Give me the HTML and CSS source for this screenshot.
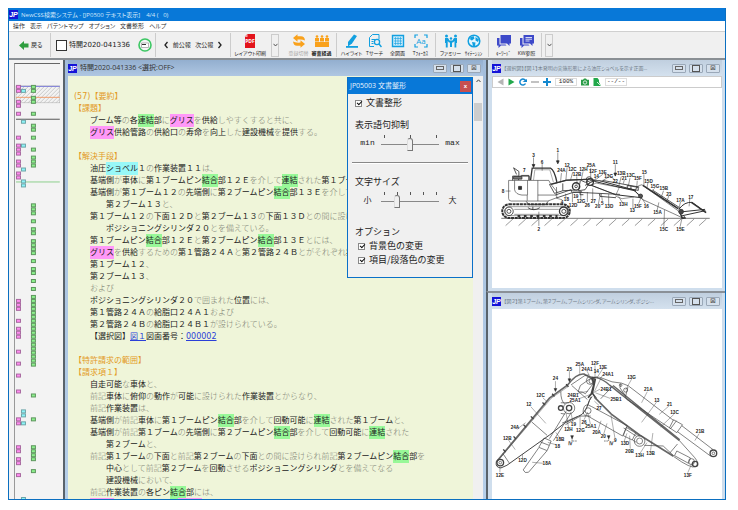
FILE: index.html
```html
<!DOCTYPE html>
<html lang="ja">
<head>
<meta charset="utf-8">
<title>NewCSS検索システム</title>
<link rel="stylesheet" href="styles.css">
</head>
<body>
<div class="app">
  <header class="titlebar"><span class="logo">JP</span><span>NewCSS検索システム - [JP0500 テキスト表示]</span><span>4/4 (&nbsp;&nbsp; 0)</span></header>
  <nav class="menu"><a href="#">操作</a><a href="#">表示</a><a href="#">パテントマップ</a><a href="#">オプション</a><a href="#">文書整形</a><a href="#">ヘルプ</a></nav>

  <div class="toolbar">
    <div class="group back">
      <button class="plain"><svg width="10" height="9" viewBox="0 0 10 9"><path d="M5 0v2.600h4.500v3.800H5V9L0 4.500z" fill="#2f9e3f"/></svg>戻る</button>
    </div>
    <div class="group doc">
      <label class="docno"><input type="checkbox">特開2020-041336</label>
      <button class="plain" aria-label="表示"><svg width="14" height="14" viewBox="0 0 14 14"><circle cx="7" cy="7" r="6" fill="#f4f4f4" stroke="#3cc763" stroke-width="1.600"/><path d="M3.500 5h7v4.500h-7z" fill="#fff" stroke="#888" stroke-width=".6"/><path d="M4 6.500h4" stroke="#333"/></svg></button>
    </div>
    <div class="group pager">
      <svg width="4" height="8" viewBox="0 0 4 8"><path d="M3.500 1 1 4l2.500 3" fill="none" stroke="#222" stroke-width="1.300"/></svg>
      <button class="plain">前公報</button><button class="plain">次公報</button>
      <svg width="4" height="8" viewBox="0 0 4 8"><path d="M.5 1 3 4 .5 7" fill="none" stroke="#222" stroke-width="1.300"/></svg>
    </div>
    <div class="group print">
      <button class="tool wide"><svg width="14" height="14" viewBox="0 0 14 14"><path d="M4.500 0H12v14H2V2.500z" fill="#e3141c"/><path d="M1.500 3 4.500 0v3z" fill="#f6a5a5"/><text x="7" y="9" text-anchor="middle" font-size="5" font-weight="700" fill="#fff">PDF</text></svg>レイアウト印刷</button>
      <button class="drop" aria-label="印刷メニュー"><svg width="5" height="4" viewBox="0 0 5 4"><path d="M.5.800 2.500 3 4.500.8" fill="none" stroke="#444" stroke-width=".9"/></svg></button>
    </div>
    <div class="group">
      <button class="tool off"><svg width="14" height="14" viewBox="0 0 14 14"><g fill="#f9a11b"><path id="turn" d="M1 4 5.500.300v2H9q3.500 0 4 4.200-2.500-1.500-7.500-1v2.300z"/><use href="#turn" transform="rotate(180 7 7)"/></g></svg>登録切替</button>
      <button class="tool strong"><svg width="14" height="14" viewBox="0 0 14 14"><path d="M0 8h14v5H0zM0 4h4v3.500H0zM5 4h4v3.500H5zM10 4h4v3.500h-4z" fill="#f9a11b"/><g fill="#f9a11b"><circle cx="2" cy="2.500" r="1.300"/><circle cx="7" cy="2.500" r="1.300"/><circle cx="12" cy="2.500" r="1.300"/></g></svg>審査経過</button>
    </div>
    <div class="group">
      <button class="tool"><svg width="14" height="14" viewBox="0 0 14 14"><path d="M9 .5 12 2 7 9.500 3 12.500V8z" fill="#12a0e0"/><path d="M1 12.900h12" stroke="#12a0e0" stroke-width="1.800"/></svg>ハイライト</button>
      <button class="tool"><svg width="14" height="14" viewBox="0 0 14 14"><g fill="none" stroke="#12a0e0"><path d="M6 12.500H1.500v-9l3-3H11V5M3.500 5.500h4M3.500 7.500h2M3.500 9.500h2"/><circle cx="9" cy="8" r="2.600" stroke-width="1.300"/><path d="m11 10 2.500 3" stroke-width="1.500"/></g></svg>Tサーチ</button>
      <button class="tool"><svg width="14" height="14" viewBox="0 0 14 14"><path d="M1.500 1.500h11v11h-11z" fill="#c9eafa" stroke="#12a0e0" stroke-width="1.400"/><path d="M4.500 3v8M7 3v8M9.500 3v8M3 4.500h8M3 7h8M3 9.500h8" stroke="#12a0e0" stroke-width=".6"/></svg>全図面</button>
      <button class="tool"><svg width="14" height="14" viewBox="0 0 14 14"><path d="M1 4V1h3M10 1h3v3M13 10v3h-3M4 13H1v-3" fill="none" stroke="#12a0e0" stroke-width="1.200"/><text x="7" y="10" text-anchor="middle" font-size="8" fill="#12a0e0">Aa</text></svg>Tﾌｫｰｶｽ</button>
    </div>
    <div class="group">
      <button class="tool"><svg width="14" height="14" viewBox="0 0 14 14"><g fill="#12a0e0"><circle cx="2.500" cy="2" r="1.500"/><circle cx="11.500" cy="2" r="1.500"/><circle cx="7" cy="4.500" r="1.200"/><path d="M1 4h3l1.500 2.500h3L10 4h3v5h-.7v4.500h-1.800V7L9 8.500H8V13H6V8.500H5L3.700 7v6.500H1.800V9H1z"/></g></svg>ファミリー</button>
      <button class="tool"><svg width="14" height="14" viewBox="0 0 14 14"><circle cx="7" cy="7" r="5.800" fill="#e6f6fd" stroke="#12a0e0" stroke-width="1.500"/><path d="M3 3.500 6.500 2l1 2.500L5 6.500 3.500 6zM8.500 3 12 5.500 11 8 8.500 6.500zM5 8l3.500.5L8 12H6z" fill="#12a0e0"/></svg>ｻｲﾃｰｼｮﾝ</button>
    </div>
    <div class="group">
      <button class="tool"><svg width="14" height="14" viewBox="0 0 14 14"><path d="M3.500 1H14v8.500h-1.500V12L10 9.500H3.500z" fill="#3d49c9"/><path d="M2.500 4H0v7.500h1.500V14L4 11.500h5.500L8.500 10.500h-6z" fill="#3d49c9"/></svg>ｷｰﾜｰﾄﾞ</button>
      <button class="tool"><svg width="14" height="14" viewBox="0 0 14 14"><path d="M3.500 1H14v8.500h-1.500V12L10 9.500H3.500z" fill="#3d49c9"/><path d="M2.500 4H0v7.500h1.500V14L4 11.500h5.500L8.500 10.500h-6z" fill="#3d49c9"/><path d="M5.500 3.500h6.500M5.500 5.200h6.500M5.500 7h4" stroke="#fff" stroke-width=".8"/></svg>KW参照</button>
    </div>
    <button class="drop" aria-label="ツールメニュー"><svg width="5" height="4" viewBox="0 0 5 4"><path d="M.5.800 2.500 3 4.500.8" fill="none" stroke="#444" stroke-width=".9"/></svg></button>
  </div>

  <main class="work">
    <aside class="map">
      <svg id="map" viewBox="14 62 46 437" preserveAspectRatio="xMinYMin slice">
        <defs><pattern id="hatch" width="4" height="4" patternUnits="userSpaceOnUse"><path d="M0 4 4 0M-1 1l2-2M3 5l2-2" stroke="#bdbdbd" stroke-width=".8"/></pattern></defs>
        <rect x="15" y="84" width="44" height="17" fill="url(#hatch)" stroke="#aaa" stroke-width=".5"/>
        <path d="M15 84.500h44" stroke="#7d7dd8"/><path d="M15 95.500h44" stroke="#f0a070"/>
        <path d="M15 117.500h44" stroke="#555"/><path d="M15 180.500h44" stroke="#8ccf8c"/>
      </svg>
    </aside>

    <section class="win active">
      <div class="wintitle"><span class="logo">JP</span><h2>特開2020-041336 &lt;選択:OFF&gt;</h2><button class="wb min" aria-label="最小化"></button><button class="wb max" aria-label="最大化"></button><button class="wb cls" aria-label="閉じる">⊠</button></div>
      <div class="textpane">
        <article class="doc-text">
          <h3>(57)【要約】</h3>
          <h3>【課題】</h3>
          <p>ブーム等<small>の</small>各<mark class="g">連結</mark>部<small>に</small><mark class="m">グリス</mark><small>を</small>供給<small>しやすくすると共に、</small></p>
          <p><mark class="m">グリス</mark>供給管路<small>の</small>供給口<small>の</small>寿命<small>を</small>向上<small>した</small>建設機械<small>を</small>提供<small>する。</small></p>
          <h3 class="gap">【解決手段】</h3>
          <p>油圧<mark class="c">ショベル</mark>１<small>の</small>作業装置１１<small>は、</small></p>
          <p>基端側<small>が</small>車体<small>に</small>第１ブームピン<mark class="g">結合</mark>部１２Ｅ<small>を介して</small><mark class="g">連結</mark><small>された</small>第１ブー</p>
          <p>基端側<small>が</small>第１ブーム１２<small>の</small>先端側<small>に</small>第２ブームピン<mark class="g">結合</mark>部１３Ｅ<small>を介して</small></p>
          <p class="sub">第２ブーム１３<small>と、</small></p>
          <p>第１ブーム１２<small>の</small>下面１２Ｄ<small>と</small>第２ブーム１３<small>の</small>下面１３Ｄ<small>との間に設け</small></p>
          <p class="sub">ポジショニングシリンダ２０<small>とを備えている。</small></p>
          <p>第１ブームピン<mark class="g">結合</mark>部１２Ｅ<small>と</small>第２ブームピン<mark class="g">結合</mark>部１３Ｅ<small>とには、</small></p>
          <p><mark class="m">グリス</mark><small>を</small>供給<small>するための</small>第１管路２４Ａ<small>と</small>第２管路２４Ｂ<small>とがそれぞれ</small>接</p>
          <p>第１ブーム１２<small>、</small></p>
          <p>第２ブーム１３<small>、</small></p>
          <p><small>および</small></p>
          <p>ポジショニングシリンダ２０<small>で囲まれた</small>位置<small>には、</small></p>
          <p>第１管路２４Ａ<small>の</small>給脂口２４Ａ１<small>および</small></p>
          <p>第２管路２４Ｂ<small>の</small>給脂口２４Ｂ１<small>が設けられている。</small></p>
          <p>【選択図】<a href="#">図１</a>図面番号：<a href="#">000002</a></p>
          <h3 class="gap">【特許請求の範囲】</h3>
          <h3>【請求項１】</h3>
          <p>自走可能<small>な</small>車体<small>と、</small></p>
          <p><small>前記</small>車体<small>に</small>俯仰<small>の</small>動作<small>が</small>可能<small>に設けられた</small>作業装置<small>とからなり、</small></p>
          <p><small>前記</small>作業装置<small>は、</small></p>
          <p>基端側<small>が前記</small>車体<small>に</small>第１ブームピン<mark class="g">結合</mark>部<small>を介して</small>回動可能<small>に</small><mark class="g">連結</mark><small>された</small>第１ブーム<small>と、</small></p>
          <p>基端側<small>が前記</small>第１ブーム<small>の</small>先端側<small>に</small>第２ブームピン<mark class="g">結合</mark>部<small>を介して</small>回動可能<small>に</small><mark class="g">連結</mark><small>された</small></p>
          <p class="sub">第２ブーム<small>と、</small></p>
          <p><small>前記</small>第１ブーム<small>の</small>下面<small>と前記</small>第２ブーム<small>の</small>下面<small>との間に設けられ前記</small>第２ブームピン<mark class="g">結合</mark>部<small>を</small></p>
          <p class="sub">中心<small>として前記</small>第２ブーム<small>を</small>回動<small>させる</small>ポジショニングシリンダ<small>とを備えてなる</small></p>
          <p class="sub">建設機械<small>において、</small></p>
          <p><small>前記</small>作業装置<small>の</small>各ピン<mark class="g">結合</mark>部<small>には、</small></p>
          <p><mark class="m">　　　</mark>　　　　　　　　<mark class="m">　　　</mark></p>
        </article>
        <div class="scroll"><svg width="5" height="4" viewBox="0 0 5 4"><path d="M.5 3 2.500.800 4.500 3" fill="none" stroke="#444"/></svg><i></i></div>
      </div>

      <form class="dialog">
        <div class="dtitle">JP05003 文書整形<button type="button" aria-label="閉じる">x</button></div>
        <div class="dbody">
          <label class="check"><input type="checkbox" checked>文書整形</label>
          <label class="cap" for="level">表示語句抑制</label>
          <div class="slide"><span class="mono">min</span>
            <div class="range"><svg width="58" height="3" viewBox="0 0 58 3"><path d="M3.500 0v3M29.500 0v3M55.500 0v3" stroke="#555"/></svg><input id="level" type="range" min="0" max="2" value="1"></div>
          <span class="mono">max</span></div>
          <hr>
          <label class="cap" for="size">文字サイズ</label>
          <div class="slide"><span>小</span>
            <div class="range"><svg width="58" height="3" viewBox="0 0 58 3"><path d="M3.500 0v3M16.500 0v3M29.500 0v3M42.500 0v3M55.500 0v3" stroke="#555"/></svg><input id="size" type="range" min="0" max="4" value="1"></div>
          <span>大</span></div>
          <p class="cap last">オプション</p>
          <label class="check in"><input type="checkbox" checked>背景色の変更</label>
          <label class="check in"><input type="checkbox" checked>項目/段落色の変更</label>
        </div>
      </form>
    </section>

    <div class="side">
      <section class="win">
        <div class="wintitle"><span class="logo">JP</span><h2>【選択図】【図１】本発明の実施形態による油圧ショベルを示す正面...</h2><button class="wb min" aria-label="最小化"></button><button class="wb max" aria-label="最大化"></button><button class="wb cls" aria-label="閉じる">⊠</button></div>
        <div class="figbar">
          <svg width="7" height="8" viewBox="0 0 7 8"><path d="M6.500.500v7L.5 4z" fill="#b5b5b5"/></svg>
          <svg width="7" height="8" viewBox="0 0 7 8"><path d="M.5.500v7l6-3.500z" fill="#22a84b"/></svg>
          <svg width="8" height="8" viewBox="0 0 8 8"><path d="M6.500 5.500A3 3 0 1 1 6.700 3" fill="none" stroke="#1488cf" stroke-width="1.500"/><path d="M3.500 4H8V1z" fill="#1488cf"/></svg>
          <svg width="8" height="8" viewBox="0 0 8 8"><path d="M0 4h8" stroke="#bbb" stroke-width="1.800"/></svg>
          <svg width="8" height="8" viewBox="0 0 8 8"><path d="M0 4h8M4 0v8" stroke="#1488cf" stroke-width="2"/></svg>
          <span class="box mono">100%</span>
          <svg width="8" height="8" viewBox="0 0 8 8"><path d="M0 1.800h2L3 .5h2l1 1.300h2v5.700H0z" fill="#2a9c48"/><circle cx="4" cy="4.500" r="1.700" fill="none" stroke="#fff" stroke-width=".8"/></svg>
          <svg width="8" height="8" viewBox="0 0 8 8"><path d="M.5 0h4l1.500 2v2L8 8H.5z" fill="#22a84b"/><path d="m4 4 3.500 3.500" stroke="#fff" stroke-width=".8"/></svg>
          <span class="box mono">--/--</span>
        </div>
        <svg class="fig" viewBox="18 -159 690 603" preserveAspectRatio="xMidYMin meet">
          <g fill="none" stroke="#333" stroke-width="2.500">
            <path d="M45 233H672" stroke="#777" stroke-width="3"/>
            <path d="M80 235 58 255M119 235l-22 20M158 235l-22 20M197 235l-22 20M236 235l-22 20M275 235l-22 20M314 235l-22 20M352 235l-22 20M391 235l-22 20M430 235l-22 20M469 235l-22 20M508 235l-22 20M547 235l-22 20M586 235l-22 20M625 235l-22 20M662 235l-22 20" stroke="#666" stroke-width="2"/>
            <rect x="48" y="191" width="203" height="41" rx="20" stroke-width="6" stroke-dasharray="9 2"/>
            <rect x="57" y="198" width="186" height="27" rx="13" stroke-width="1.500"/>
            <circle cx="68" cy="212" r="13"/><circle cx="68" cy="212" r="6"/><circle cx="233" cy="212" r="13" stroke-width="4"/><circle cx="233" cy="212" r="6"/>
            <path d="M84 206h134M84 221h134" stroke-width="1.500"/><path d="M94 226h120" stroke-width="6" stroke-dasharray="8 11"/><path d="M125 201q18 12 36 0M140 198v10M120 182l8 10h50l8-10"/>
            <path d="M67 119v54q0 8 8 8h110l27-10-1-32M67 119h121l5 10 20 25M85 119v28q3 14 22 16h16v17M124 119v44M155 119v62M155 163h54" stroke-width="1.800"/>
            <path d="M133 118 138 82h55q12 5 20 45" stroke-width="4"/><path d="M142 118l4-31h45l11 38" stroke-width="1.200"/>
            <path d="M79 119v-13h50v13M91 101l-9-20 16 11v11M97 104v14M105 104h23v14"/><path d="M97 137h9v9h-9z" fill="#333"/><path d="M82 107h25v8H82z" fill="#777"/>
            <path d="M190 131l51-12 31-2 42-2M190 131l15 27 25-8 36-2M230 128v22" stroke-width="2.500"/>
            <path d="M195 131l46-13 62-2" stroke-width="4"/><path d="M207 163l48-16M210 172l48-16 30-3M255 147l3 9"/>
            <circle cx="270" cy="137" r="11" stroke-width="4"/><circle cx="270" cy="137" r="4"/><circle cx="312" cy="124" r="10" stroke-width="4"/><path d="M283 119l-6 31 20-3 15-23M300 116q2-10 12-8l13 12M297 134l25-13M285 119q12 10 26 2"/>
            <path d="M312 120h30l100 27 25 22M317 134l72 28 78 9M325 122l125 29" stroke-width="3"/><path d="M340 158l62 3M260 154l80 4 2 9 48 4M350 119l110 20M398 139l51 9M282 152v10h10"/>
            <path d="M330 127l-15 7 75 28 10-22zM388 166l20 8 36-5" stroke-width="1.500"/>
            <path d="M448 151q2-16 20-19l110 79 11 20-28-13-92-42z" stroke-width="1.800"/><path d="M471 134l106 70" stroke-width="5"/><circle cx="464" cy="166" r="6" fill="#555"/><path d="M500 148l80 52 7 18M503 155l65 43M424 134l33 6v9l-33-6zM435 136v9"/>
            <path d="M580 205q16-22 39-20l42 31M583 214l75-8M590 225l69-15" stroke-width="3"/><path d="M617 185l44 31" stroke-width="5"/><circle cx="586" cy="213" r="7" fill="#444"/><path d="M584 219l6 13h10" stroke-width="4"/><circle cx="591" cy="229" r="5"/>
            <path d="M215 35v29M142 50v25M168 70v20M388 71v30M388 118l-20-15M58 151h15M158 213v43M228 177l-16-4M243 80l-4 41M226 97l-3 28M260 94l-7 25M272 107l1 25M291 92l-6 27M314 82v32M330 113l-14 10M350 101l-27 20M366 110l-29 17M406 107l-8 31M415 118l-3 11M432 112l-5 25M454 120l-2 25M474 101v32M486 126l-3 17M506 143l-7 7M533 150l-7 20M549 165l-6 18M584 184l-6 25M612 174l-2 23M240 172l-2-13M259 185v-28M284 174v-17M304 184v-30M320 176v-33M337 190l6-30M349 180l-3-21M368 191v-31M409 185l-11-17M441 203v-29M458 189l8-20M479 190l-12-19M514 208l5-23M534 258l2-50M583 258l6-28" stroke-width="1.500"/>
            <path d="M211 60h8l-4 9zM138 71h8l-4 9zM384 97h8l-4 9z" fill="#222"/>
          </g>
          <g class="refs"><text x="215" y="33">1</text><text x="142" y="49">3</text><text x="168" y="70">6</text><text x="114" y="95">7</text><text x="226" y="95">24A</text><text x="243" y="78">12</text><text x="259" y="91">12C</text><text x="273" y="105">12B</text><text x="292" y="91">12H</text><text x="315" y="80">25A</text><text x="321" y="96">12F</text><text x="331" y="111">14</text><text x="350" y="99">13E</text><text x="368" y="113">13G</text><text x="388" y="126">22</text><text x="388" y="69">11</text><text x="406" y="104">13B</text><text x="415" y="119">21</text><text x="434" y="109">13C</text><text x="456" y="119">15F</text><text x="475" y="99">15</text><text x="488" y="127">15D</text><text x="507" y="141">15G</text><text x="534" y="148">15B</text><text x="549" y="165">23</text><text x="584" y="183">17A</text><text x="615" y="175">17</text><text x="50" y="156">8</text><text x="241" y="182">18</text><text x="228" y="190">4</text><text x="269" y="173">19</text><text x="261" y="198">12D</text><text x="285" y="186">12G</text><text x="304" y="198">26</text><text x="322" y="187">27</text><text x="335" y="202">20</text><text x="349" y="192">5</text><text x="369" y="203">13D</text><text x="412" y="196">13H</text><text x="439" y="215">13</text><text x="456" y="201">15F</text><text x="481" y="202">16</text><text x="515" y="220">15A</text><text x="534" y="272">15C</text><text x="584" y="272">15E</text><text x="158" y="272">2</text></g>
        </svg>
      </section>
      <section class="win">
        <div class="wintitle"><span class="logo">JP</span><h2>【図２】第１ブーム、第２ブーム、ブームシリンダ、アームシリンダ、ポジシ...</h2><button class="wb min" aria-label="最小化"></button><button class="wb max" aria-label="最大化"></button><button class="wb cls" aria-label="閉じる">⊠</button></div>
        <svg class="fig" viewBox="18 57 690 570" preserveAspectRatio="xMidYMin meet">
          <g fill="none" stroke="#444" stroke-width="2">
            <path d="M30 517 190 325l55-40q28-36 50-32l22 12 12 4" stroke-width="5" stroke="#666"/>
            <path d="M36 512 196 325l52-36" stroke-width="1.200"/>
            <path d="M30 517q-3 17 14 18l18-8 128-91 46-36 52-26q14-12 22-42l8-12" stroke-width="3"/>
            <circle cx="42" cy="519" r="10" stroke-width="4"/><circle cx="42" cy="519" r="4"/>
            <path d="M50 492l19 28M137 397l46 40M224 305q0 28 12 38" />
            <g stroke-width="4"><path d="M51 479l7 8M82 440l7 8M112 405l8 8M134 380l8 8M169 338l8 8M198 312l7 8M240 283l7 8"/></g>
            <circle cx="249" cy="355" r="17"/><circle cx="249" cy="355" r="8" stroke-width="4"/><circle cx="224" cy="355" r="7" stroke-width="4"/><path d="M224 339h25M224 371l12 2M255 285l40-27 14-3M257 287l47 42M283 287l33-23 5 18-23 30q-8-8-22-6z"/>
            <circle cx="313" cy="272" r="12"/><circle cx="316" cy="274" r="7"/><path d="M317 263h20M318 265l6 17-8 30-10 12M328 267l-9 43 12 17" stroke-width="5"/>
            <path d="M329 262q25 8 42 24l210 167M381 287l201 163" stroke-width="4" stroke="#666"/>
            <path d="M325 322l51 51 85 63 102 64" stroke-width="5" stroke="#666"/>
            <path d="M581 453l45 50q16 18 3 28-12 8-65-30M552 490l23-27M573 484l-7 14 42 23 6-16z" /><circle cx="617" cy="516" r="9"/><circle cx="628" cy="523" r="8" stroke-width="4"/>
            <path d="M380 289l-36 38M314 322l-9 25M316 350l108 58M302 377l108 62 14-31M316 350q-20-12-24 8t10 19"/><circle cx="306" cy="363" r="9"/>
            <path d="M421 413l28 17-10 21-27-13zM449 432l12 8M440 451l11 7"/><circle cx="461" cy="454" r="9"/><circle cx="461" cy="454" r="16"/><path d="M475 467l57 2 31 29M413 415l39 25"/>
            <path d="M340 262l38 14 29 4M407 280l20 8 136 104M404 282l-2 12 13 19 8 16 132 88" /><circle cx="404" cy="286" r="4"/><circle cx="419" cy="301" r="6"/>
            <path d="M426 292l-7 27M563 390l27 15-17 24-22-15zM572 393l-17 23M588 408l94 72M575 426l99 73"/><circle cx="683" cy="491" r="10" stroke-width="4"/><circle cx="683" cy="491" r="4"/>
            <path d="M240 365l-50 82M254 371l-52 82M174 445l21 9-12 29-25-10zM163 457l26 10M158 474l-47 67M182 484l-55 64q-11 5-16-7M228 400l47-20M238 405l45-26h31"/>
            <path d="M258 442v12h16M368 442v12h-16" stroke-dasharray="5 2"/>
            <path d="M208 274v28M250 244v28M437 268l-18 32M484 306l-17 33M512 337l-45 61M549 349l-29 25M564 374l-40 38M134 351l45 50M92 419l26-20M66 450l21 30M170 324l12 11M109 505V493M41 548v-16M606 549l13-29M640 432l-13 21M170 521l-32-3M212 466l-27-8M220 443l-11-15M247 412l-7-42M261 399l-7-33M282 413v-36M294 390l11-23M313 403l-7-31M336 421l9-28M353 433l10-32M387 446l-12-70M415 454l8-23M433 477l-2-39M463 490l20-31M494 483l7-53M339 347l-14-13M275 311l31-7M281 326l35-13M342 298l-22 12M373 326l-45-17M281 229v23M303 244l8 15M327 227v34M350 237l-17 27M350 255l-25 50" stroke-width="1.300"/>
            <path d="M204 296h8l-4 9zM246 267h8l-4 9zM254 438h8l-4 9zM364 438h8l-4 9z" fill="#222"/>
          </g>
          <g class="refs"><text x="281" y="227">25A</text><text x="327" y="226">12F</text><text x="303" y="243">24A1</text><text x="331" y="250">14</text><text x="351" y="237">13E</text><text x="366" y="259">24A1</text><text x="250" y="243">25</text><text x="208" y="272">24</text><text x="437" y="267">13G</text><text x="487" y="305">21A</text><text x="360" y="303">24B1</text><text x="163" y="323">12C</text><text x="261" y="323">24B1</text><text x="267" y="336">25A1</text><text x="390" y="333">25B1</text><text x="513" y="336">13</text><text x="551" y="348">21</text><text x="128" y="350">12</text><text x="339" y="360">27</text><text x="566" y="373">13C</text><text x="86" y="419">24A</text><text x="247" y="424">12H</text><text x="262" y="410">19</text><text x="283" y="426">12G</text><text x="294" y="402">26</text><text x="314" y="415">25A1</text><text x="332" y="434">20A</text><text x="352" y="446">20</text><text x="388" y="458">9</text><text x="417" y="467">13D</text><text x="431" y="490">20B</text><text x="461" y="503">13H</text><text x="494" y="496">13B</text><text x="63" y="451">12B</text><text x="222" y="455">18B</text><text x="214" y="476">18</text><text x="252" y="466">Ⅳ</text><text x="376" y="466">Ⅳ</text><text x="109" y="516">12D</text><text x="182" y="526">18A</text><text x="41" y="562">12E</text><text x="606" y="562">13F</text><text x="643" y="431">21B</text></g>
        </svg>
      </section>
    </div>
  </main>
</div>
<script src="script.js"></script>
</body>
</html>
```
FILE: styles.css
```css
* { box-sizing: border-box; }
body { margin: 0; height: 100vh; padding: 8px 12px 10px 8px; background: #fff; color: #222; font: 6px/8px "Open Sans", "Noto Sans CJK JP", sans-serif; font-feature-settings: "palt"; }
h2, h3, p, hr { margin: 0; font: inherit; }
h2 { font-feature-settings: inherit; }
button { font: inherit; font-feature-settings: inherit; color: inherit; padding: 0; border: 0; background: none; }
svg { display: block; flex: none; }
.mono { font-family: "Liberation Mono", monospace; }

.app { display: flex; flex-direction: column; height: 100%; border: 1px solid #0b6fc0; border-top: 0; overflow: hidden; background: #f0f0f0; }
.logo { flex: none; width: 9px; height: 9px; background: #1414d8; color: #fff; font: italic 700 7px/9px "Liberation Sans", sans-serif; text-align: center; }
.titlebar { display: flex; align-items: center; gap: 3px; flex: none; height: 13px; background: #0878d8; color: #d5e9fa; white-space: nowrap; }
.titlebar span:last-child { margin-left: 3px; }
.menu { display: flex; align-items: center; gap: 5px; flex: none; height: 10px; padding: 0 4px; background: #fff; }
.menu a { color: #333; text-decoration: none; white-space: nowrap; }

.toolbar { display: flex; align-items: center; flex: none; height: 27px; border-top: 1px solid #d0d0d0; background: #f0f0f0; white-space: nowrap; }
.group { display: flex; align-items: center; height: 24px; padding: 0 3px; border-right: 1px solid #ccc; }
.plain { display: flex; align-items: center; gap: 2px; }
.back { width: 42px; padding-left: 10px; }
.doc { width: 105px; padding-left: 5px; justify-content: space-between; }
.docno { display: flex; align-items: center; gap: 2px; font: 7px/10px "DejaVu Sans", "Noto Sans CJK JP", sans-serif; }
.docno input { appearance: none; width: 11px; height: 11px; margin: 0; border: 1px solid #333; background: #fff; }
.pager { width: 75px; padding: 0 8px; justify-content: space-between; }
.group.print { width: 48px; padding: 0; gap: 2px; border-right: 0; }
.tool { display: flex; flex-direction: column; align-items: center; justify-content: space-between; width: 23px; height: 23px; font-size: 5px; line-height: 8px; }
.tool.wide { width: 40px; }
.tool.off { color: #aaa; }
.tool.strong { font-weight: 700; }
.drop { display: flex; align-items: center; justify-content: center; width: 8px; height: 23px; margin-left: 3px; border: 1px solid #ccc; }
.print .drop { margin: 0; }
.print { margin-right: 5px; }

.work { flex: 1; min-height: 0; display: grid; grid-template-columns: 54px 423fr 239fr; border-top: 2px solid #8a8f94; background: #f3f3f3; }
.map { padding: 3px 3px 0 5px; overflow: hidden; min-height: 0; }
.map svg { width: 100%; height: 100%; border-left: 1px solid #999; border-top: 1px solid #666; }
.px { stroke-width: 1; }
.px.m { fill: #ff8cf0; stroke: #a869a0; }
.px.c { fill: #8cf4f8; stroke: #6fa5a8; }
.px.g { fill: #8cf08c; stroke: #5d955d; }

.win { position: relative; display: flex; flex-direction: column; min-width: 0; min-height: 0; padding: 0 3px 3px 4px; border-left: 2px solid #59636b; background: #cfdeed; overflow: hidden; }
.win.active { padding: 0 3px; background: linear-gradient(#a3bddb, #b6cfe9); }
.wintitle { display: flex; align-items: center; gap: 3px; flex: none; height: 16px; padding-right: 2px; background: linear-gradient(#c0cfdf, #d4e1ee); }
.active > .wintitle { background: linear-gradient(#93afcf, #afc7e2); color: #222; }
.wintitle h2 { flex: 1; min-width: 0; overflow: hidden; white-space: nowrap; font-size: 5px; color: #727d89; }
.active > .wintitle h2 { font-size: 7px; color: #333; }
.wb { flex: none; width: 14px; height: 9px; border: 1px solid #9aa8b8; border-radius: 1px; background: #d5e0ec; display: flex; align-items: center; justify-content: center; font: 7px/7px "DejaVu Sans", sans-serif; color: #555; }
.min::before { content: ""; width: 6px; height: 2px; border: 1px solid #666; }
.max::before { content: ""; width: 6px; height: 5px; border: 1px solid #555; }

.textpane { flex: 1; min-height: 0; display: flex; background: #eff5d9; }
.doc-text { flex: 1; min-width: 0; overflow: hidden; padding: 15px 0 0 6px; white-space: nowrap; font: 8px/12px "DejaVu Sans", "Noto Sans CJK JP", sans-serif; font-feature-settings: normal; text-spacing-trim: space-all; color: #222; }
.doc-text h3 { color: #e39a25; }
.doc-text h3.gap { margin-top: 12px; }
.doc-text p { height: 12px; padding-left: 16px; }
.doc-text .sub { padding-left: 32px; }
.doc-text small { font-size: 8px; font-weight: 300; color: #7c8072; }
.doc-text a { color: #2b3fd8; }
mark { color: inherit; padding: 2px 0; }
mark.g { background: #98f898; }
mark.m { background: #ff98f8; }
mark.c { background: #98f8f8; }
.scroll { flex: none; width: 10px; padding: 3px 1px; background: #f0f0f0; }
.scroll svg { margin: 0 auto 20px; }
.scroll i { display: block; height: 18px; background: #cdcdcd; }

.dialog { position: absolute; top: 17px; right: 13px; width: 126px; height: 201px; border: 1px solid #0a70c8; background: #f0f0f0; }
.dtitle { display: flex; align-items: center; justify-content: space-between; height: 16px; padding: 0 1px 0 2px; background: #0878d8; color: #e8f3fd; font-size: 7px; }
.dtitle button { width: 11px; height: 11px; background: #c75050; color: #fff; font: 700 6px/9px "Liberation Sans", sans-serif; }
.dbody { padding: 4px 4px; font: 9px/10px "Noto Sans CJK JP", sans-serif; font-feature-settings: normal; }
.check { display: flex; align-items: center; gap: 4px; height: 10px; margin-left: 3px; white-space: nowrap; }
.check.in { margin: 4px 0 0 6px; }
.check input { appearance: none; position: relative; width: 7px; height: 7px; margin: 0; border: 1px solid #888; background: #fff; }
.check input:checked::after { content: ""; position: absolute; left: 1px; top: 0; width: 4px; height: 2px; border: solid #111; border-width: 0 0 1px 1px; transform: rotate(-45deg); }
.cap { display: block; margin: 12px 0 0 3px; }
.slide { display: flex; align-items: center; justify-content: center; gap: 6px; height: 18px; margin-top: 4px; font-size: 8px; }
.slide span { flex: none; width: 15px; text-align: center; }
.range input { appearance: none; display: block; width: 58px; height: 13px; margin: 0; background: linear-gradient(#888, #888) center / 100% 1px no-repeat; }
.range input::-webkit-slider-thumb { appearance: none; width: 6px; height: 13px; border: 1px solid #777; border-left-color: #ddd; border-radius: 3px 3px 0 0; background: #f0f0f0; }
.dbody hr { margin: 10px 0 0; border: 0; border-top: 1px solid #888; border-bottom: 1px solid #fff; }
.cap.last { margin-top: 18px; }
.dbody hr + .cap { margin-top: 13px; }

.side { display: grid; grid-template-rows: 232fr 208fr; min-height: 0; }
.side .win + .win { border-top: 2px solid #8a9097; padding-bottom: 0; }
.figbar { display: flex; align-items: center; gap: 4px; flex: none; height: 12px; padding: 0 4px; background: #fff; border: 1px solid #ccc; }
.box { width: 22px; height: 8px; border: 1px solid #ddd; text-align: center; line-height: 6px; }
.fig { flex: 1; min-height: 0; width: 100%; background: #fff; }
.refs { font: 700 14px "Liberation Sans", sans-serif; fill: #222; text-anchor: middle; }
```
FILE: script.js
```js
// Hit positions of each search term along the document map: column x, then tops.
const run = (from, to) => Array.from({ length: (to - from) / 4 + 1 }, (_, i) => from + i * 4);
const hits = {
  m: [15, [83, 87, 98, 102, 110, 134, 142, 146, 150, 158, 162, 170, 174, 298, 302, 306, 318, 326, 330, 334, 349, 361, 373, 389, 417, 421, 445, 449, 457, 461, 473]],
  c: [20, [87, 118, 142, 166, 178, 182, 409, 413, 421, 497]],
  g: [30, [83, 87, 94, 98, 110, 122, 126, 134, 146, 154, 158, 162, 202, 206, 210, 218, 226, 230, 238, 242, 246, 250, 258, 266, 270, 278, 286, ...run(294, 362), 393, 417, 445, 449, 453, 457, 469]]
};
const map = document.getElementById("map");
for (const [kind, [x, tops]] of Object.entries(hits)) {
  for (const y of tops) {
    const r = document.createElementNS("http://www.w3.org/2000/svg", "rect");
    r.setAttribute("class", "px " + kind);
    r.setAttribute("x", x + 0.5);
    r.setAttribute("y", y + 0.5);
    r.setAttribute("width", 4);
    r.setAttribute("height", 3);
    map.append(r);
  }
}
```
